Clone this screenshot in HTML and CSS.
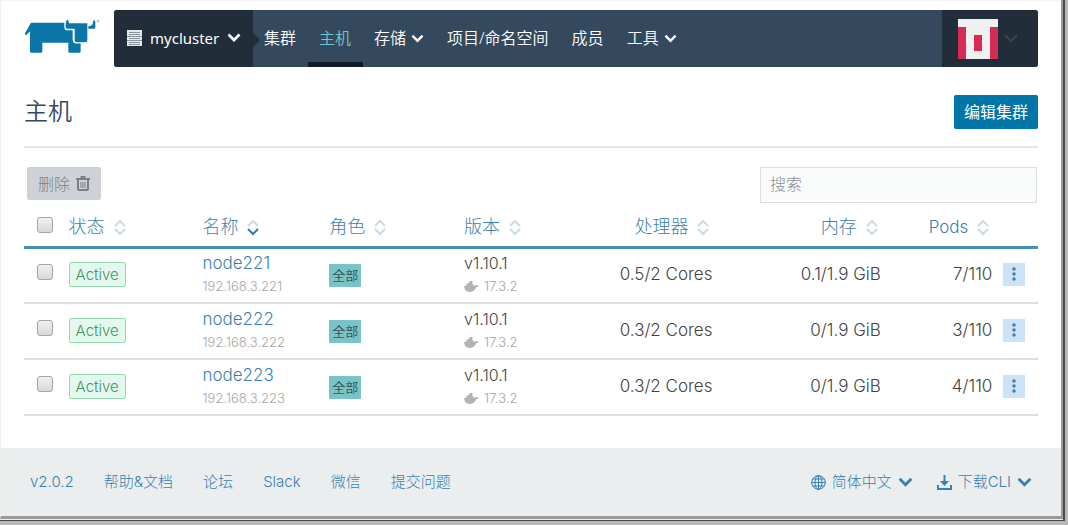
FILE: index.html
```html
<!DOCTYPE html>
<html lang="zh-CN">
<head>
<meta charset="utf-8">
<title>主机 - mycluster</title>
<link rel="stylesheet" href="styles.css">
</head>
<body>
<svg class="sprite" aria-hidden="true">
  <symbol id="chevron" viewBox="0 0 14 9"><path d="M1.500 1.500 7 7l5.500-5.500" fill="none" stroke="currentColor" stroke-width="2.700"/></symbol>
  <symbol id="sort" viewBox="0 0 12 17"><path class="sort-up" d="M1 7 6 2l5 5"/><path class="sort-down" d="M1 10l5 5 5-5"/></symbol>
  <symbol id="docker" viewBox="0 0 16 12"><path d="M0 5.500h2V3.500h2v-1.500h2V0h3v3.500h1.500v2h1.200c.6-.3.700-1.200.2-2.200.9.200 1.500.8 1.700 1.600.8-.2 1.600-.1 2.400.3-.5 1-1.400 1.400-2.600 1.400C12 10 9.500 12 6 12 2.500 12 .2 10 0 5.500z" fill="currentColor"/></symbol>
  <symbol id="dots" viewBox="0 0 4 14"><circle cx="2" cy="2" r="1.700"/><circle cx="2" cy="7" r="1.700"/><circle cx="2" cy="12" r="1.700"/></symbol>
</svg>
<div class="window">
  <header class="header">
    <a class="logo" href="#" aria-label="Rancher">
      <svg viewBox="74 60 228 104" width="76" height="35">
        <path fill="#0b77a9" d="M95 71H195V86Q195 93 202 93H220V121Q220 133 232 133H244V157Q244 161 240 161H211Q207 161 207 157V131H129V157Q129 161 125 161H96Q92 161 92 157V97L80 108 76 104Z"/>
        <path fill="#0b77a9" d="M204 62Q209 64 209 72H264V123Q264 129 258 129H232Q226 129 226 123V89H204Q199 89 199 84V72Q200 64 204 62Z"/>
        <path fill="#0b77a9" d="M267 81Q281 82 281 68L284 62 288 67V85Q288 89 283 89H267Z"/>
        <circle cx="296" cy="66" r="3" fill="none" stroke="#6ba9c6" stroke-width="2"/>
      </svg>
    </a>
    <nav class="nav" aria-label="主导航">
      <button class="cluster" type="button">
        <svg viewBox="0 0 15 16" width="15" height="16"><path fill="#e5e8e8" d="M0 0h15v16H0z"/><path stroke="#8b949a" d="M2 2.500h11M2 4.500h11M0 6.500h15M2 8.500h11M0 10.500h15M2 12.500h11M2 14.500h11"/></svg>
        <span>mycluster</span>
        <svg width="14" height="9"><use href="#chevron"/></svg>
      </button>
      <div class="items">
        <a class="item" href="#">集群</a>
        <a class="item active" href="#" aria-current="page">主机</a>
        <button class="item" type="button">存储<svg width="13" height="9"><use href="#chevron"/></svg></button>
        <a class="item" href="#">项目/命名空间</a>
        <a class="item" href="#">成员</a>
        <button class="item" type="button">工具<svg width="13" height="9"><use href="#chevron"/></svg></button>
      </div>
      <button class="user" type="button" aria-label="用户菜单">
        <svg viewBox="0 0 5 5" width="40" height="40" shape-rendering="crispEdges"><path fill="#f0f0f0" d="M0 0h5v5H0z"/><path fill="#d42c54" d="M0 1h1v4H0zM4 1h1v4H4zM2 2h1v2H2z"/></svg>
        <svg class="user-arrow" viewBox="0 0 14 9" width="14" height="9"><path d="M1 1l6 6 6-6" fill="none" stroke="currentColor" stroke-width="2"/></svg>
      </button>
    </nav>
  </header>
  <main class="main">
    <div class="title-row">
      <h1>主机</h1>
      <button class="primary" type="button">编辑集群</button>
    </div>
    <div class="toolbar">
      <button class="delete" type="button" disabled>删除
        <svg viewBox="0 0 14 15" width="14" height="15"><path fill="currentColor" d="M0 2h4.500V0h5v2H14v2H0z"/><path fill="none" stroke="currentColor" stroke-width="2" d="M2 4v9q0 1 1 1h8q1 0 1-1V4"/><path stroke="currentColor" d="M5 6v6M7 6v6M9 6v6"/></svg>
      </button>
      <input class="search" type="search" placeholder="搜索" aria-label="搜索">
    </div>
    <table class="hosts">
      <colgroup><col class="c-check"><col class="c-state"><col class="c-name"><col class="c-role"><col class="c-version"><col class="c-cpu"><col class="c-memory"><col class="c-pods"><col class="c-action"></colgroup>
      <thead>
        <tr>
          <th class="check"><input type="checkbox" aria-label="全选"></th>
          <th><button class="sort" type="button">状态<svg width="12" height="17"><use href="#sort"/></svg></button></th>
          <th aria-sort="ascending"><button class="sort sorted" type="button">名称<svg width="12" height="17"><use href="#sort"/></svg></button></th>
          <th><button class="sort" type="button">角色<svg width="12" height="17"><use href="#sort"/></svg></button></th>
          <th><button class="sort" type="button">版本<svg width="12" height="17"><use href="#sort"/></svg></button></th>
          <th class="num"><button class="sort" type="button">处理器<svg width="12" height="17"><use href="#sort"/></svg></button></th>
          <th class="num"><button class="sort" type="button">内存<svg width="12" height="17"><use href="#sort"/></svg></button></th>
          <th class="num"><button class="sort latin" type="button">Pods<svg width="12" height="17"><use href="#sort"/></svg></button></th>
          <th></th>
        </tr>
      </thead>
      <tbody>
        <tr>
          <td class="check"><input type="checkbox" aria-label="node221"></td>
          <td><span class="state">Active</span></td>
          <td><a class="name" href="#">node221</a><div class="sub">192.168.3.221</div></td>
          <td><span class="role">全部</span></td>
          <td>v1.10.1<div class="sub"><svg width="15" height="11"><use href="#docker"/></svg>17.3.2</div></td>
          <td class="num">0.5/2 Cores</td><td class="num">0.1/1.9 GiB</td><td class="num">7/110</td>
          <td class="action"><button class="more" type="button" aria-label="更多操作"><svg width="4" height="14"><use href="#dots"/></svg></button></td>
        </tr>
        <tr>
          <td class="check"><input type="checkbox" aria-label="node222"></td>
          <td><span class="state">Active</span></td>
          <td><a class="name" href="#">node222</a><div class="sub">192.168.3.222</div></td>
          <td><span class="role">全部</span></td>
          <td>v1.10.1<div class="sub"><svg width="15" height="11"><use href="#docker"/></svg>17.3.2</div></td>
          <td class="num">0.3/2 Cores</td><td class="num">0/1.9 GiB</td><td class="num">3/110</td>
          <td class="action"><button class="more" type="button" aria-label="更多操作"><svg width="4" height="14"><use href="#dots"/></svg></button></td>
        </tr>
        <tr>
          <td class="check"><input type="checkbox" aria-label="node223"></td>
          <td><span class="state">Active</span></td>
          <td><a class="name" href="#">node223</a><div class="sub">192.168.3.223</div></td>
          <td><span class="role">全部</span></td>
          <td>v1.10.1<div class="sub"><svg width="15" height="11"><use href="#docker"/></svg>17.3.2</div></td>
          <td class="num">0.3/2 Cores</td><td class="num">0/1.9 GiB</td><td class="num">4/110</td>
          <td class="action"><button class="more" type="button" aria-label="更多操作"><svg width="4" height="14"><use href="#dots"/></svg></button></td>
        </tr>
      </tbody>
    </table>
  </main>
  <footer class="footer">
    <div class="links">
      <a href="#">v2.0.2</a>
      <a href="#">帮助&amp;文档</a>
      <a href="#">论坛</a>
      <a href="#">Slack</a>
      <a href="#">微信</a>
      <a href="#">提交问题</a>
    </div>
    <div class="menus">
      <button type="button">
        <svg viewBox="0 0 15 15" width="15" height="15" fill="none" stroke="currentColor"><circle cx="7.500" cy="7.500" r="6.800"/><ellipse cx="7.500" cy="7.500" rx="3.500" ry="6.800"/><path d="M7.500.5v14M.5 7.500h14M1.500 4h12M1.500 11h12"/></svg>
        简体中文
        <svg width="15" height="10"><use href="#chevron"/></svg>
      </button>
      <button type="button">
        <svg viewBox="0 0 15 15" width="15" height="15"><path fill="none" stroke="currentColor" stroke-width="2" d="M1 10v4h13v-4M7.500 0v9"/><path fill="currentColor" d="M3 6h9l-4.500 5z"/></svg>
        下载CLI
        <svg width="15" height="10"><use href="#chevron"/></svg>
      </button>
    </div>
  </footer>
</div>
</body>
</html>
```
FILE: styles.css
```css
* { box-sizing: border-box; }

body {
  margin: 0;
  min-height: 100vh;
  display: flex;
  flex-direction: column;
  padding: 0 5px 6px 0;
  background: #b8b8b8;
  color: #424242;
  font: 300 16px/24px Inter, "Noto Sans CJK SC", sans-serif;
}

button, input { font: inherit; color: inherit; }
button { border: 0; padding: 0; background: none; white-space: nowrap; cursor: pointer; }
button:disabled { cursor: default; }
a { color: #3a7fb0; text-decoration: none; }
svg { flex: none; }

.sprite { position: absolute; width: 0; height: 0; }

.window {
  flex: 1;
  display: flex;
  flex-direction: column;
  border-left: 1px solid #eee;
  border-right: 2px solid #9a9a9a;
  border-bottom: 3px solid #9a9a9a;
  box-shadow: inset 0 1px #f3f3f3, 0 1px #eee, 0 0 0 2px #4a4a4a;
  background: #fff;
}

.header { display: flex; align-items: center; gap: 14px; padding: 10px 23px 0; }
.logo { display: flex; padding-bottom: 4px; }

.nav {
  flex: 1;
  display: flex;
  height: 57px;
  border-radius: 3px;
  overflow: hidden;
  background: #34495e;
  color: #fff;
  font-family: "Noto Sans", "Noto Sans CJK SC", sans-serif;
  font-weight: 350;
}
.cluster {
  position: relative;
  display: flex;
  align-items: center;
  gap: 8px;
  width: 139px;
  padding: 0 0 2px 13px;
  background: #222d3a;
  font-size: 15px;
  font-weight: 400;
}
.cluster::after {
  content: "";
  position: absolute;
  left: 100%;
  top: 23px;
  border: 7px solid transparent;
  border-left-color: #222d3a;
}
.items { flex: 1; display: flex; }
.item {
  display: flex;
  align-items: center;
  gap: 5px;
  padding: 4px 12px 0 11px;
  border-bottom: 5px solid transparent;
  color: #fff;
}
.item.active { border-bottom-color: #111a24; color: #71c4cd; }
.user { display: flex; align-items: center; gap: 6px; padding: 0 20px 0 16px; background: #222d3a; }
.user-arrow { color: #3d4447; }

.main { padding: 28px 23px 32px; }
.title-row {
  display: flex;
  align-items: center;
  justify-content: space-between;
  padding-bottom: 17px;
  border-bottom: 2px solid #e6e6e6;
}
h1 { margin: 0; font-size: 24px; font-weight: 350; line-height: 34px; color: #34495e; }
.primary { height: 34px; padding: 0 10px; border-radius: 2px; background: #0075a8; color: #fff; font-weight: 400; }

.toolbar { display: flex; justify-content: space-between; align-items: flex-start; padding: 19px 1px 0 3px; }
.delete {
  display: flex;
  align-items: center;
  gap: 6px;
  height: 33px;
  padding: 0 11px;
  border-radius: 2px;
  background: #ced2d6;
  color: #7b8086;
}
.search {
  width: 277px;
  height: 36px;
  padding: 0 9px 2px;
  border: 1px solid #dcdfe0;
  background: #fafcfc;
}
.search::placeholder { color: #8b8f94; }

.hosts { width: 100%; table-layout: fixed; border-collapse: collapse; }
.c-check { width: 4.4%; }
.c-state { width: 13.2%; }
.c-name { width: 12.5%; }
.c-role { width: 13.3%; }
.c-version { width: 10.4%; }
.c-cpu { width: 14.1%; }
.c-memory { width: 16.6%; }
.c-pods { width: 11%; }
.c-action { width: 4.5%; }

th, td { padding: 0; text-align: left; white-space: nowrap; }
th { height: 44px; padding-top: 6px; border-bottom: 3px solid #4590b8; font-weight: 300; }
td { height: 56px; padding-bottom: 2px; border-bottom: 2px solid #dfdfdf; }
.check { padding-left: 13px; }
.num { text-align: right; font-size: 17px; }
th.num { padding-right: 3px; }

.sort { display: inline-flex; align-items: center; gap: 9px; color: #3a7fb0; font-size: 18px; }
.sort.latin { font-size: 17px; }
.sort svg { fill: none; stroke: #c6dce9; stroke-width: 2; }
.sorted svg { --down: #2f7fae; }
.sort-down { stroke: var(--down, #c6dce9); }

input[type="checkbox"] {
  appearance: none;
  display: block;
  width: 16px;
  height: 16px;
  margin: 0 0 5px;
  border: 1px solid #a5a5a5;
  border-radius: 3px;
  background: linear-gradient(#f1f1f1, #d8d8d8);
}

.state {
  display: inline-block;
  padding: 0 6px;
  border: 1px solid #95dcb0;
  border-radius: 2px;
  background: #e4f9ed;
  color: #45945f;
  font-size: 15px;
  line-height: 23px;
}
.name { font-size: 17px; }
.sub { display: flex; align-items: center; gap: 5px; color: #a6a6a6; font-size: 13px; line-height: 22px; }
.sub svg { color: #b3b3b3; }
.role { display: inline-block; padding: 0 3px; background: #79c3c9; color: #222; font-size: 13px; line-height: 23px; }
.action { padding-left: 11px; }
.more { display: flex; align-items: center; justify-content: center; width: 22px; height: 23px; background: #cce3f5; fill: #3a7fb0; }

.footer {
  flex: 1;
  display: flex;
  align-items: center;
  justify-content: space-between;
  padding: 0 29px;
  background: #eaeeef;
  color: #3a7fb0;
  font-size: 15px;
}
.links { display: flex; gap: 30px; }
.menus { display: flex; gap: 24px; }
.menus button { display: flex; align-items: center; gap: 6px; }
```
